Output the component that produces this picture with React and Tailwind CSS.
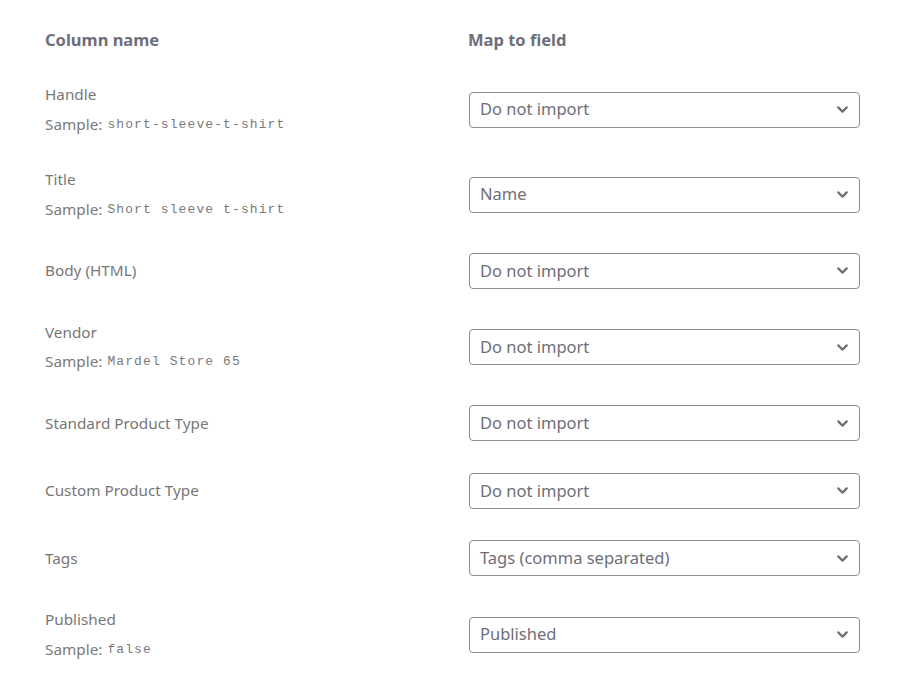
import { ChevronDown } from 'lucide-react';

const ROWS = [
    { name: 'Handle', sample: 'short-sleeve-t-shirt', field: 'Do not import' },
    { name: 'Title', sample: 'Short sleeve t-shirt', field: 'Name' },
    { name: 'Body (HTML)', field: 'Do not import' },
    { name: 'Vendor', sample: 'Mardel Store 65', field: 'Do not import' },
    { name: 'Standard Product Type', field: 'Do not import' },
    { name: 'Custom Product Type', field: 'Do not import' },
    { name: 'Tags', field: 'Tags (comma separated)' },
    { name: 'Published', sample: 'false', field: 'Published' },
];

function FieldSelect({ value }) {
    return (
        <div className="h-9 w-full rounded-[4px] border border-[#8c8c96] bg-white flex items-center justify-between pl-[10px] pr-[8px]">
            <span className="text-[16.5px] text-[#6e6e78] leading-none">{value}</span>
            <ChevronDown size={17} strokeWidth={3} className="text-[#6c6c76]" />
        </div>
    );
}

export default function App() {
    return (
        <div className="min-h-[696px] w-[905px] bg-white px-[45px] pt-[28px] font-['Noto_Sans','Open_Sans',sans-serif]">
            <div className="grid grid-cols-[424px_1fr] h-6 items-center text-[16.5px] font-bold text-[#6e6e7a]">
                <div>Column name</div>
                <div className="-ml-px">Map to field</div>
            </div>
            <div className="mt-[15px]">
                {ROWS.map((row) => (
                    <div key={row.name} className="grid grid-cols-[424px_1fr] items-center py-[15.75px]">
                        <div className="flex flex-col">
                            <div className="h-6 flex items-center text-[15.3px] text-[#777777]">{row.name}</div>
                            {row.sample && (
                                <div className="mt-[5.5px] h-6 flex items-center gap-[5px] text-[15.3px] text-[#7a7a7a]">
                                    <span>Sample:</span>
                                    <code className="font-['Liberation_Mono',monospace] text-[13px] leading-none tracking-[1.1px]">{row.sample}</code>
                                </div>
                            )}
                        </div>
                        <FieldSelect value={row.field} />
                    </div>
                ))}
            </div>
        </div>
    );
}
